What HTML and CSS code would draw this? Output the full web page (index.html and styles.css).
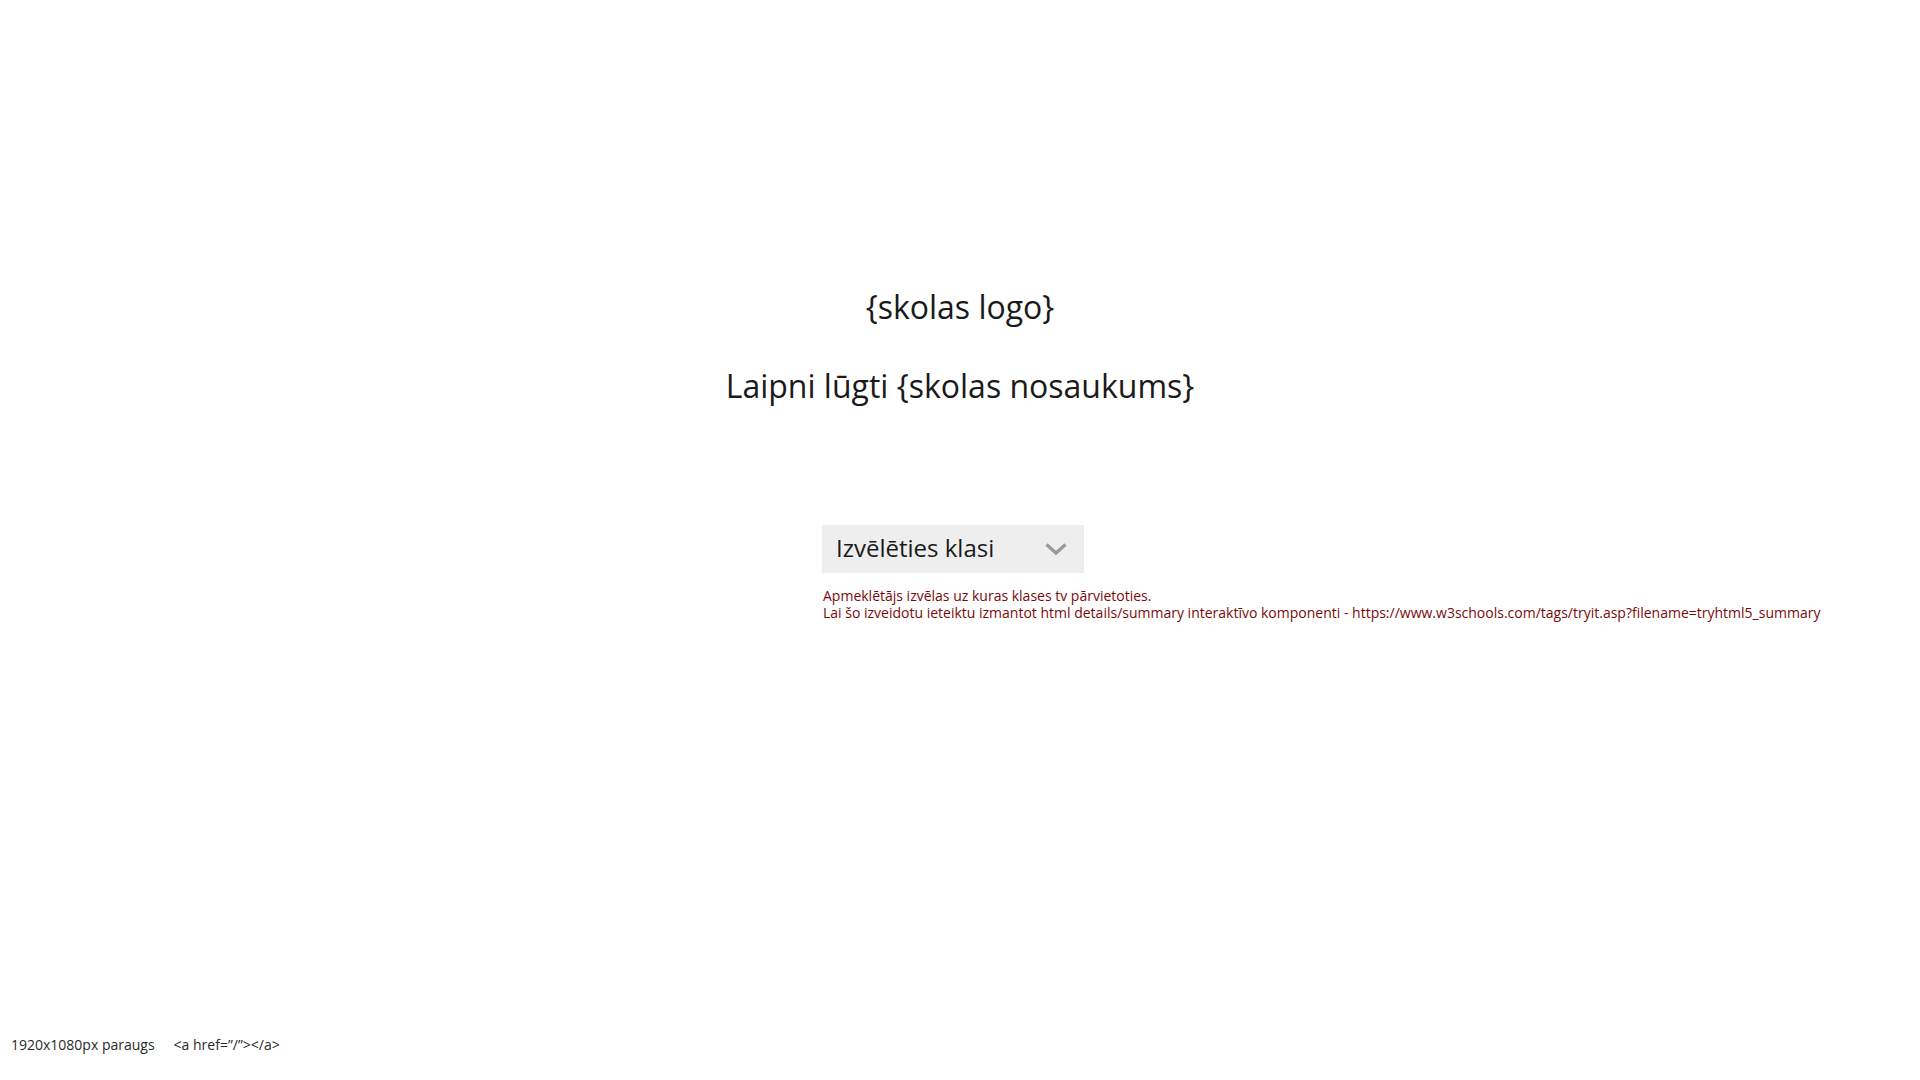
FILE: index.html
```html
<!DOCTYPE html>
<html lang="lv">
<head>
<meta charset="utf-8">
<title>Sākums</title>
<link rel="stylesheet" href="styles.css">
</head>
<body>
<main class="page">
  <header class="intro">
    <div class="logo">{skolas logo}</div>
    <h1 class="welcome">Laipni lūgti {skolas nosaukums}</h1>
  </header>
  <section class="picker">
    <details class="select">
      <summary class="select-head">
        <span class="select-label">Izvēlēties klasi</span>
        <svg class="chev" width="22" height="12" viewBox="0 0 22 12"><path d="M1.5 1.5 L11 10 L20.5 1.5" fill="none" stroke="#9a9a9a" stroke-width="3.4" stroke-linecap="butt" stroke-linejoin="miter"/></svg>
      </summary>
    </details>
    <p class="note">Apmeklētājs izvēlas uz kuras klases tv pārvietoties.<br>Lai šo izveidotu ieteiktu izmantot html details/summary interaktīvo komponenti - https://www.w3schools.com/tags/tryit.asp?filename=tryhtml5_summary</p>
  </section>
</main>
<footer class="foot">
  <span class="foot-item">1920x1080px paraugs</span>
  <span class="foot-item">&lt;a href=”/”&gt;&lt;/a&gt;</span>
</footer>
</body>
</html>
```
FILE: styles.css
```css
html, body {
  margin: 0;
  padding: 0;
}
body {
  min-height: 100vh;
  display: flex;
  flex-direction: column;
  background: #ffffff;
  font-family: "Open Sans", "Liberation Sans", sans-serif;
  color: #1a1a1a;
}
.page {
  flex: 1;
  display: flex;
  flex-direction: column;
}
.intro {
  padding-top: 285px;
  text-align: center;
}
.logo {
  font-size: 32px;
  line-height: 44px;
}
.welcome {
  margin: 35px 0 0;
  font-size: 32px;
  font-weight: 400;
  line-height: 44px;
}
.picker {
  margin-top: 117px;
  margin-left: 822px;
}
.select {
  width: 262px;
}
.select-head {
  list-style: none;
  height: 48px;
  box-sizing: border-box;
  padding: 0 17px 0 14px;
  background: #eeeeee;
  display: flex;
  align-items: center;
  justify-content: space-between;
  cursor: pointer;
}
.select-head::-webkit-details-marker {
  display: none;
}
.select-label {
  font-size: 24px;
  line-height: 32px;
  margin-top: -2px;
  color: #1a1a1a;
}
.chev {
  display: block;
}
.note {
  margin: 14px 0 0 1px;
  font-size: 14px;
  line-height: 17px;
  color: #7a0a0a;
  white-space: nowrap;
}
.foot {
  display: flex;
  gap: 19px;
  padding: 0 0 25px 11px;
  font-size: 14px;
  line-height: 20px;
  color: #2a2a2a;
}
```
